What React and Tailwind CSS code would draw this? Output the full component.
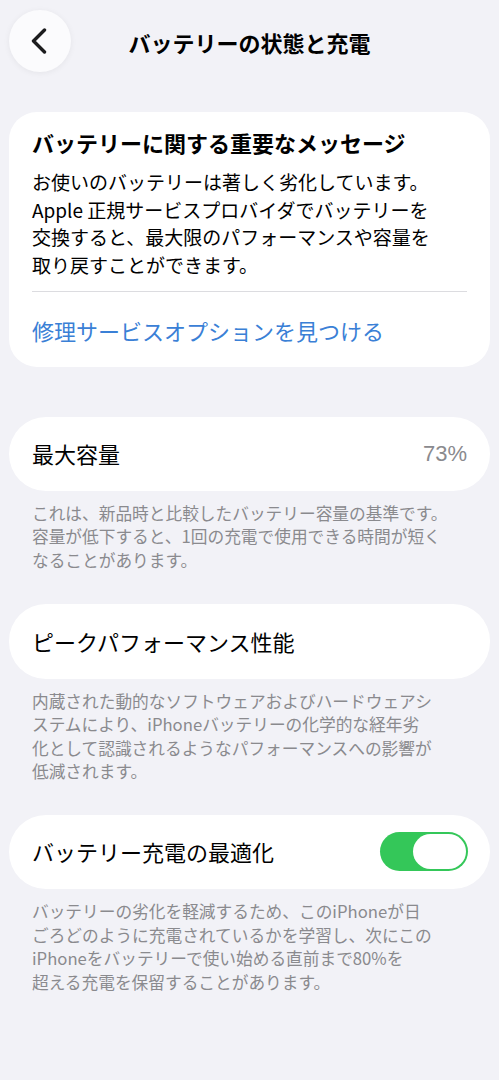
import { useState } from 'react'

const font = { fontFamily: '"Noto Sans CJK JP", "Noto Sans", sans-serif' }

function Footer({ lines }) {
  return (
    <p className="px-[32px] pt-[11px] pb-[31px] text-[16.7px] leading-[23.6px] text-[#8a8a8e]">
      {lines.map((l, i) => (
        <span key={i} className="block whitespace-nowrap">{l}</span>
      ))}
    </p>
  )
}

function App() {
  const [optimized, setOptimized] = useState(true)

  return (
    <div className="min-h-[1080px] w-[499px] bg-[#f2f2f7] text-black" style={font}>
      {/* Header */}
      <div className="relative h-[112px]">
        <button
          className="absolute left-[9px] top-[10px] w-[62px] h-[62px] rounded-full bg-[#fbfbfd] shadow-[0_1px_6px_rgba(0,0,0,0.06)] flex items-center justify-center"
          aria-label="Back"
        >
          <svg width="18" height="26" viewBox="0 0 18 26" fill="none" className="-ml-[2px]">
            <path d="M14.5 2 L3.5 13 L14.5 24" stroke="#1c1c1e" strokeWidth="3.4" strokeLinecap="round" strokeLinejoin="round" />
          </svg>
        </button>
        <h1 className="pt-[27px] text-center text-[22px] leading-[30px] font-bold">
          バッテリーの状態と充電
        </h1>
      </div>

      {/* Important message card */}
      <div className="mx-[9px] bg-white rounded-[28px] px-[23px] pt-[15px] pb-[22px]">
        <h2 className="text-[22px] leading-[30px] font-bold whitespace-nowrap">バッテリーに関する重要なメッセージ</h2>
        <p className="mt-[11px] text-[19px] leading-[27.7px]">
          <span className="block whitespace-nowrap">お使いのバッテリーは著しく劣化しています。</span>
          <span className="block whitespace-nowrap">Apple 正規サービスプロバイダでバッテリーを</span>
          <span className="block whitespace-nowrap">交換すると、最大限のパフォーマンスや容量を</span>
          <span className="block whitespace-nowrap">取り戻すことができます。</span>
        </p>
        <div className="mt-[12px] h-px bg-[#dcdce0]" />
        <a className="block mt-[23px] text-[22px] leading-[30px] text-[#3a80d6]">修理サービスオプションを見つける</a>
      </div>

      <div className="h-[50px]" />

      {/* Max capacity */}
      <div className="mx-[9px] h-[74px] bg-white rounded-[37px] px-[23px] flex items-center justify-between">
        <span className="text-[22px]">最大容量</span>
        <span className="text-[22px] text-[#8a8a8e]" style={{ fontFamily: '"Liberation Sans", sans-serif' }}>73%</span>
      </div>
      <Footer
        lines={[
          'これは、新品時と比較したバッテリー容量の基準です。',
          '容量が低下すると、1回の充電で使用できる時間が短く',
          'なることがあります。',
        ]}
      />

      {/* Peak performance */}
      <div className="mx-[9px] h-[75px] bg-white rounded-[37px] px-[23px] flex items-center">
        <span className="text-[22px]">ピークパフォーマンス性能</span>
      </div>
      <Footer
        lines={[
          '内蔵された動的なソフトウェアおよびハードウェアシ',
          'ステムにより、iPhoneバッテリーの化学的な経年劣',
          '化として認識されるようなパフォーマンスへの影響が',
          '低減されます。',
        ]}
      />

      {/* Optimized charging */}
      <div className="mx-[9px] h-[74px] bg-white rounded-[37px] pl-[23px] pr-[22px] flex items-center justify-between">
        <span className="text-[22px]">バッテリー充電の最適化</span>
        <button
          onClick={() => setOptimized(v => !v)}
          className={`w-[88px] h-[39px] rounded-full p-[2px] flex ${optimized ? 'bg-[#34c759] justify-end' : 'bg-[#e9e9eb] justify-start'}`}
          aria-label="Toggle"
        >
          <span className="w-[53px] h-[35px] rounded-full bg-white" />
        </button>
      </div>
      <Footer
        lines={[
          'バッテリーの劣化を軽減するため、このiPhoneが日',
          'ごろどのように充電されているかを学習し、次にこの',
          'iPhoneをバッテリーで使い始める直前まで80%を',
          '超える充電を保留することがあります。',
        ]}
      />
    </div>
  )
}

export default App
